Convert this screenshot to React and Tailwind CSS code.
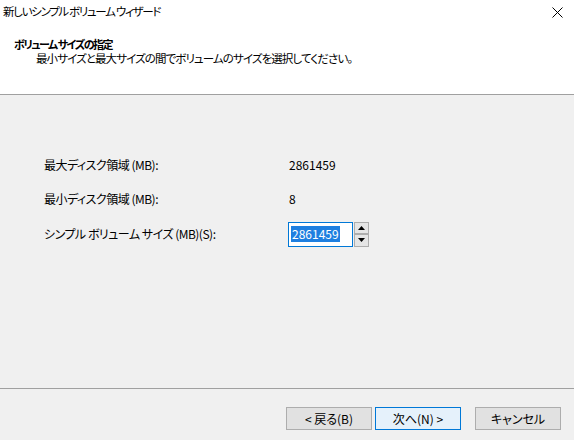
import React from 'react';

const SpinButton = ({ dir }) => (
  <div className="flex-1 flex items-center justify-center bg-[#e5e5e5] border border-[#adadad]">
    <svg width="7" height="4" viewBox="0 0 7 4">
      {dir === 'up' ? <path d="M3.5 0 L7 4 L0 4 Z" fill="#000" /> : <path d="M0 0 L7 0 L3.5 4 Z" fill="#000" />}
    </svg>
  </div>
);

const Row = ({ label, children, className = '' }) => (
  <div className={`flex items-center h-[24px] ${className}`}>
    <div className="w-[244px] tracking-[-0.5px]">{label}</div>
    <div className="flex items-center">{children}</div>
  </div>
);

const WizButton = ({ children, primary }) => (
  <button
    className={`h-[23px] w-[86px] flex items-center justify-center text-[12px] text-black border ${
      primary ? 'bg-[#e5f1fb] border-[#0078d7]' : 'bg-[#e1e1e1] border-[#adadad]'
    }`}
  >
    {children}
  </button>
);

export default function App() {
  return (
    <div className="w-[574px] h-[440px] flex flex-col bg-[#f0f0f0] text-black text-[12px] font-['Noto_Sans_CJK_JP',sans-serif] [font-feature-settings:'palt']">
      {/* title bar */}
      <div className="h-[24px] bg-white flex items-center justify-between pl-[3px] pr-[11px]">
        <span className="text-[11.5px] tracking-[-1.3px] leading-[12px] -mt-[2px]">新しいシンプル ボリューム ウィザード</span>
        <svg width="11" height="11" viewBox="0 0 11 11" className="mt-[1px]">
          <path d="M0.5 0.5 L10.5 10.5 M10.5 0.5 L0.5 10.5" stroke="#000" strokeWidth="1" />
        </svg>
      </div>

      {/* header */}
      <div className="h-[71px] bg-white border-b border-[#a0a0a0] pl-[14px] pt-[13px] leading-[14px]">
        <div className="font-bold text-[11px] tracking-[-1.5px]">ボリューム サイズの指定</div>
        <div className="pl-[22px] text-[11.5px] tracking-[-0.9px]">最小サイズと最大サイズの間でボリュームのサイズを選択してください。</div>
      </div>

      {/* body */}
      <div className="flex-1 pl-[44px] pt-[58px] flex flex-col gap-[10px]">
        <Row label="最大ディスク領域 (MB):">
          <span className="pl-[1px]">2861459</span>
        </Row>
        <Row label="最小ディスク領域 (MB):">
          <span className="pl-[1px]">8</span>
        </Row>
        <Row label="シンプル ボリューム サイズ (MB)(S):" className="mt-[1px]">
          <div className="w-[65px] h-[25px] bg-white border border-[#0078d7] flex items-center pl-[2px]">
            <span className="bg-[#1e7fe0] text-white leading-[16px] px-[1px]">2861459</span>
          </div>
          <div className="ml-[1px] w-[15px] h-[25px] flex flex-col">
            <SpinButton dir="up" />
            <SpinButton dir="down" />
          </div>
        </Row>
      </div>

      {/* footer */}
      <div className="h-[52px] border-t border-[#a0a0a0] flex justify-end items-start pt-[18px] pr-[13px]">
        <div className="flex gap-[3px]">
          <WizButton>&lt; 戻る(B)</WizButton>
          <WizButton primary>次へ(N) &gt;</WizButton>
        </div>
        <div className="ml-[14px]">
          <WizButton>キャンセル</WizButton>
        </div>
      </div>
    </div>
  );
}
